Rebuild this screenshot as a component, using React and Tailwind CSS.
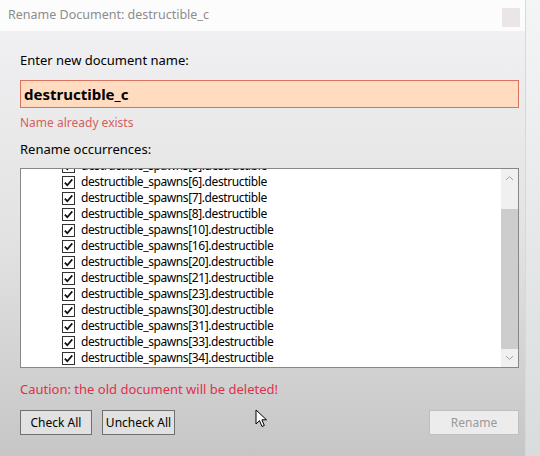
import React from "react";

const rows = [5, 6, 7, 8, 10, 16, 20, 21, 23, 30, 31, 33, 34];

function Check() {
  return (
    <span className="flex h-[13px] w-[13px] shrink-0 items-center justify-center border border-[#333] bg-white">
      <svg width="11" height="11" viewBox="0 0 11 11">
        <path d="M1.8 5.6 L4.3 8.2 L9.3 2.4" fill="none" stroke="#111" strokeWidth="1.7" />
      </svg>
    </span>
  );
}

export default function App() {
  return (
    <div className="flex h-[456px] w-[540px] overflow-hidden bg-gradient-to-b from-[#f4f6f6] to-[#d9dcdc]" style={{ fontFamily: '"Noto Sans", sans-serif' }}>
      <div className="relative flex w-[526px] shrink-0 flex-col border-r border-[#d8d8d8]">
        <div className="flex h-[31px] items-center justify-between bg-[#fcfcfc] pl-[8px] pr-[5px]">
          <span className="text-[12.5px] text-[#8c8c8c]">Rename Document: destructible_c</span>
          <span className="mt-[4px] h-[19px] w-[18px] bg-[#e9e5e9]" />
        </div>
        <div className="flex flex-1 flex-col bg-gradient-to-b from-[#f0f0f2] via-[#e2e2e2] to-[#c6c6c6] pl-[20px] pr-[6px]">
          <div className="mt-[20px] text-[13px] leading-[18px] text-black">Enter new document name:</div>
          <div className="mt-[11px] flex h-[28px] w-[499px] items-center border border-[#d9735e] bg-[#ffdcc0] px-[3px] text-[15px] font-bold text-black">
            destructible_c
          </div>
          <div className="mt-[6px] text-[12px] leading-[18px] text-[#d4605c]">Name already exists</div>
          <div className="mt-[8px] text-[13px] leading-[18px] text-black">Rename occurrences:</div>
          <div className="mt-[10px] flex h-[200px] w-[499px] overflow-hidden border border-[#878787] bg-white">
            <div className="flex-1 overflow-hidden">
              <div className="flex -translate-y-[11px] flex-col pl-[41px]">
                {rows.map((n) => (
                  <div key={n} className="flex h-[16px] items-center gap-[6px]">
                    <Check />
                    <span className="text-[12px] leading-[16px] tracking-[-0.4px] text-black">
                      destructible_spawns[{n}].destructible
                    </span>
                  </div>
                ))}
              </div>
            </div>
            <div className="flex w-[17px] flex-col bg-[#f0f0f0]">
              <div className="flex h-[17px] items-center justify-center">
                <svg width="9" height="6" viewBox="0 0 9 6"><path d="M1 5 L4.5 1.5 L8 5" fill="none" stroke="#a0a0a0" strokeWidth="1" /></svg>
              </div>
              <div className="h-[23px]" />
              <div className="h-[140px] bg-[#cdcdcd]" />
              <div className="flex flex-1 items-center justify-center">
                <svg width="9" height="6" viewBox="0 0 9 6"><path d="M1 1 L4.5 4.5 L8 1" fill="none" stroke="#a0a0a0" strokeWidth="1" /></svg>
              </div>
            </div>
          </div>
          <div className="mt-[12px] text-[13px] leading-[18px] text-[#e0304c]">Caution: the old document will be deleted!</div>
          <div className="mt-[12px] flex w-[499px] items-start">
            <button className="flex h-[25px] w-[72px] items-center justify-center border border-[#707070] bg-[#e1e1e1] text-[12px] text-black">Check All</button>
            <button className="ml-[10px] flex h-[25px] w-[73px] items-center justify-center border border-[#707070] bg-[#e1e1e1] text-[12px] text-black">Uncheck All</button>
            <svg className="ml-[80px] mt-[-1px]" width="13" height="20" viewBox="0 0 13 20">
              <path d="M1 1 L1 15 L4.5 11.6 L7 17.5 L9.3 16.5 L6.9 10.8 L11.5 10.8 Z" fill="#fff" stroke="#000" strokeWidth="1" />
            </svg>
            <div className="flex-1" />
            <button className="flex h-[25px] w-[90px] items-center justify-center border border-[#bfbfbf] bg-[#ececec] text-[12px] text-[#9a9a9a]">Rename</button>
          </div>
        </div>
      </div>
      <div className="flex-1" />
    </div>
  );
}
